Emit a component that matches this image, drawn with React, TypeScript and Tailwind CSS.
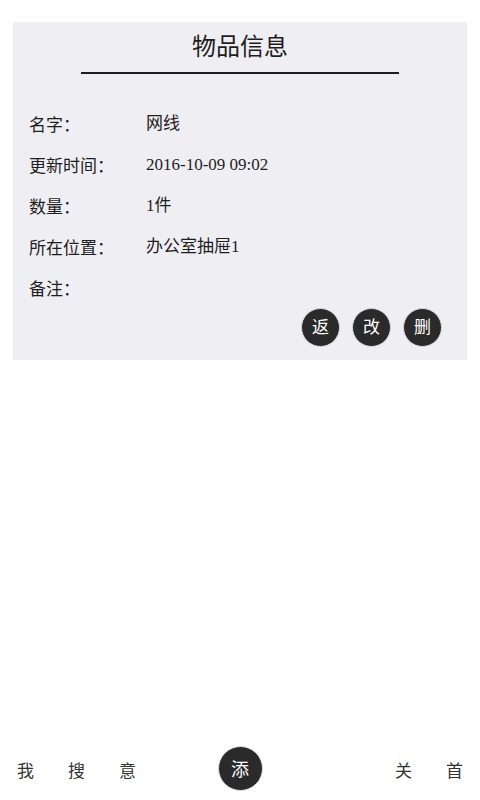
const rows: [string, string][] = [
  ["名字：", "网线"],
  ["更新时间：", "2016-10-09 09:02"],
  ["数量：", "1件"],
  ["所在位置：", "办公室抽屉1"],
  ["备注：", ""],
];

function RoundBtn({ label, size }: { label: string; size: "sm" | "lg" }) {
  return (
    <button
      className={
        size === "sm"
          ? "h-[39px] w-[39px] rounded-full bg-[#2a2a2a] text-white text-[17px] grid place-items-center border border-[#d8d8dc]"
          : "h-[45px] w-[45px] rounded-full bg-[#2a2a2a] text-white text-[18px] grid place-items-center border border-[#e0e0e0]"
      }
    >
      {label}
    </button>
  );
}

export default function App() {
  return (
    <div
      className="h-[800px] w-[480px] bg-white flex flex-col justify-between text-[#1e1e1e]"
      style={{ fontFamily: '"Liberation Serif", "Noto Sans CJK SC", serif' }}
    >
      {/* item card */}
      <div className="mx-[13px] mt-[22px] bg-[#efeef3] pb-[13px]">
        <h1
          className="text-center text-[24px] leading-[46px]"
          style={{ fontFamily: '"Noto Sans CJK SC", sans-serif' }}
        >
          物品信息
        </h1>
        <div className="mx-auto mt-[4px] h-[2px] w-[318px] bg-[#1e1e1e]" />

        <div className="mt-[29px] px-[16px]">
          {rows.map(([label, value]) => (
            <div key={label} className="flex items-center h-[41px] text-[17px]">
              <span
                className="w-[117px] shrink-0"
                style={{ fontFamily: '"Noto Sans CJK SC", sans-serif' }}
              >
                {label}
              </span>
              <span>{value}</span>
            </div>
          ))}
        </div>

        <div className="flex justify-end gap-[12px] pr-[25px]">
          <RoundBtn label="返" size="sm" />
          <RoundBtn label="改" size="sm" />
          <RoundBtn label="删" size="sm" />
        </div>
      </div>

      {/* bottom nav */}
      <div
        className="h-[60px] flex items-center text-[17px] text-[#333]"
        style={{ fontFamily: '"Noto Sans CJK SC", sans-serif' }}
      >
        <div className="flex flex-1">
          <span className="w-[51px] text-center">我</span>
          <span className="w-[51px] text-center">搜</span>
          <span className="w-[51px] text-center">意</span>
        </div>
        <div className="mb-[4px]">
          <RoundBtn label="添" size="lg" />
        </div>
        <div className="flex flex-1 justify-end">
          <span className="w-[51px] text-center">关</span>
          <span className="w-[51px] text-center">首</span>
        </div>
      </div>
    </div>
  );
}
